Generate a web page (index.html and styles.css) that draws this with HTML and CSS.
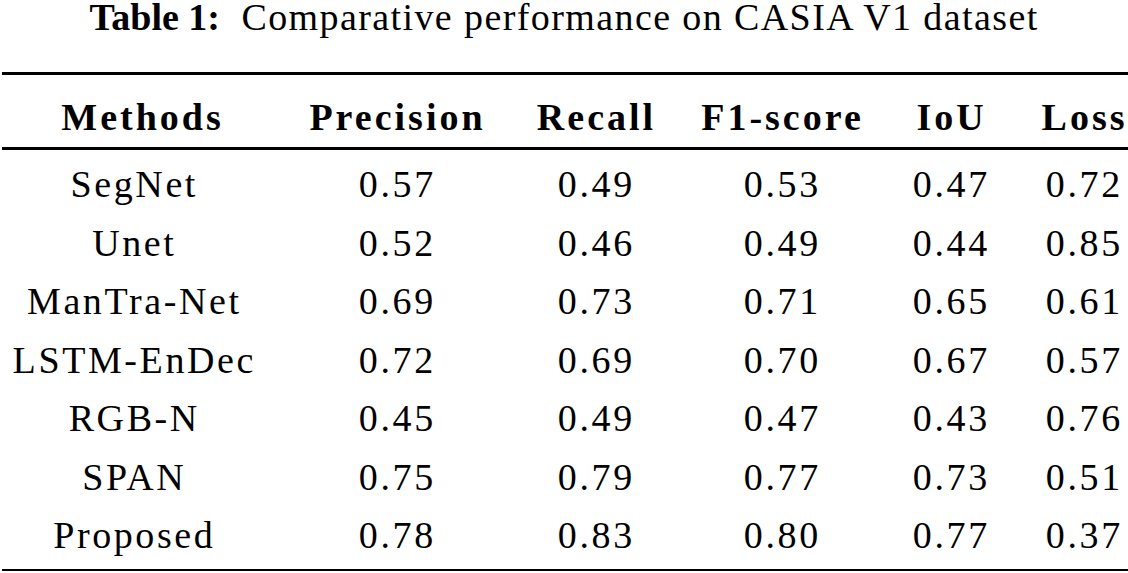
FILE: index.html
```html
<!DOCTYPE html>
<html lang="en">
<head>
<meta charset="utf-8">
<title>Table 1</title>
<link rel="stylesheet" href="styles.css">
</head>
<body>
<div class="page">
  <p class="caption"><span class="label">Table 1:</span> <span class="title">Comparative performance on CASIA V1 dataset</span></p>
  <table class="results">
    <colgroup>
      <col class="c-method">
      <col class="c-prec">
      <col class="c-rec">
      <col class="c-f1">
      <col class="c-iou">
      <col class="c-loss">
    </colgroup>
    <thead>
      <tr><th class="h-method">Methods</th><th>Precision</th><th>Recall</th><th>F1-score</th><th>IoU</th><th>Loss</th></tr>
    </thead>
    <tbody>
      <tr><td>SegNet</td><td>0.57</td><td>0.49</td><td>0.53</td><td>0.47</td><td>0.72</td></tr>
      <tr><td>Unet</td><td>0.52</td><td>0.46</td><td>0.49</td><td>0.44</td><td>0.85</td></tr>
      <tr><td>ManTra-Net</td><td>0.69</td><td>0.73</td><td>0.71</td><td>0.65</td><td>0.61</td></tr>
      <tr><td>LSTM-EnDec</td><td>0.72</td><td>0.69</td><td>0.70</td><td>0.67</td><td>0.57</td></tr>
      <tr><td>RGB-N</td><td>0.45</td><td>0.49</td><td>0.47</td><td>0.43</td><td>0.76</td></tr>
      <tr><td>SPAN</td><td>0.75</td><td>0.79</td><td>0.77</td><td>0.73</td><td>0.51</td></tr>
      <tr><td>Proposed</td><td>0.78</td><td>0.83</td><td>0.80</td><td>0.77</td><td>0.37</td></tr>
    </tbody>
  </table>
</div>
</body>
</html>
```
FILE: styles.css
```css
html, body {
  margin: 0;
  padding: 0;
  background: #fff;
}
body {
  font-family: "Liberation Serif", "Times New Roman", serif;
  color: #000;
  overflow: hidden;
}
.page {
  width: 1128px;
  height: 573px;
  overflow: hidden;
}
.caption {
  margin: 0 0 38px;
  height: 34px;
  line-height: 34px;
  font-size: 38px;
  text-align: center;
  white-space: nowrap;
}
.caption .label {
  font-weight: bold;
  margin-right: 12px;
}
.caption .title {
  letter-spacing: 1.4px;
}
.results {
  border-collapse: separate;
  border-spacing: 0;
  table-layout: fixed;
  width: 1164px;
  margin-left: 2px;
  font-size: 38px;
}
.c-method { width: 262px; }
.c-prec { width: 264px; }
.c-rec { width: 134px; }
.c-f1 { width: 238px; }
.c-iou { width: 100px; }
.c-loss { width: 166px; }
.results th {
  font-weight: bold;
  text-align: center;
  line-height: 44px;
  letter-spacing: 3px;
  padding: 20px 0 8px 3px;
  border-top: 3px solid #000;
  border-bottom: 3px solid #000;
  white-space: nowrap;
}
.results th.h-method {
  padding-left: 19px;
}
.results td {
  text-align: center;
  line-height: 58.5px;
  letter-spacing: 2.6px;
  padding: 0 0 0 2.6px;
  white-space: nowrap;
}
.results tbody tr:first-child td {
  padding-top: 5px;
}
.results tbody tr:last-child td {
  padding-bottom: 4px;
  border-bottom: 2px solid #000;
}
```
